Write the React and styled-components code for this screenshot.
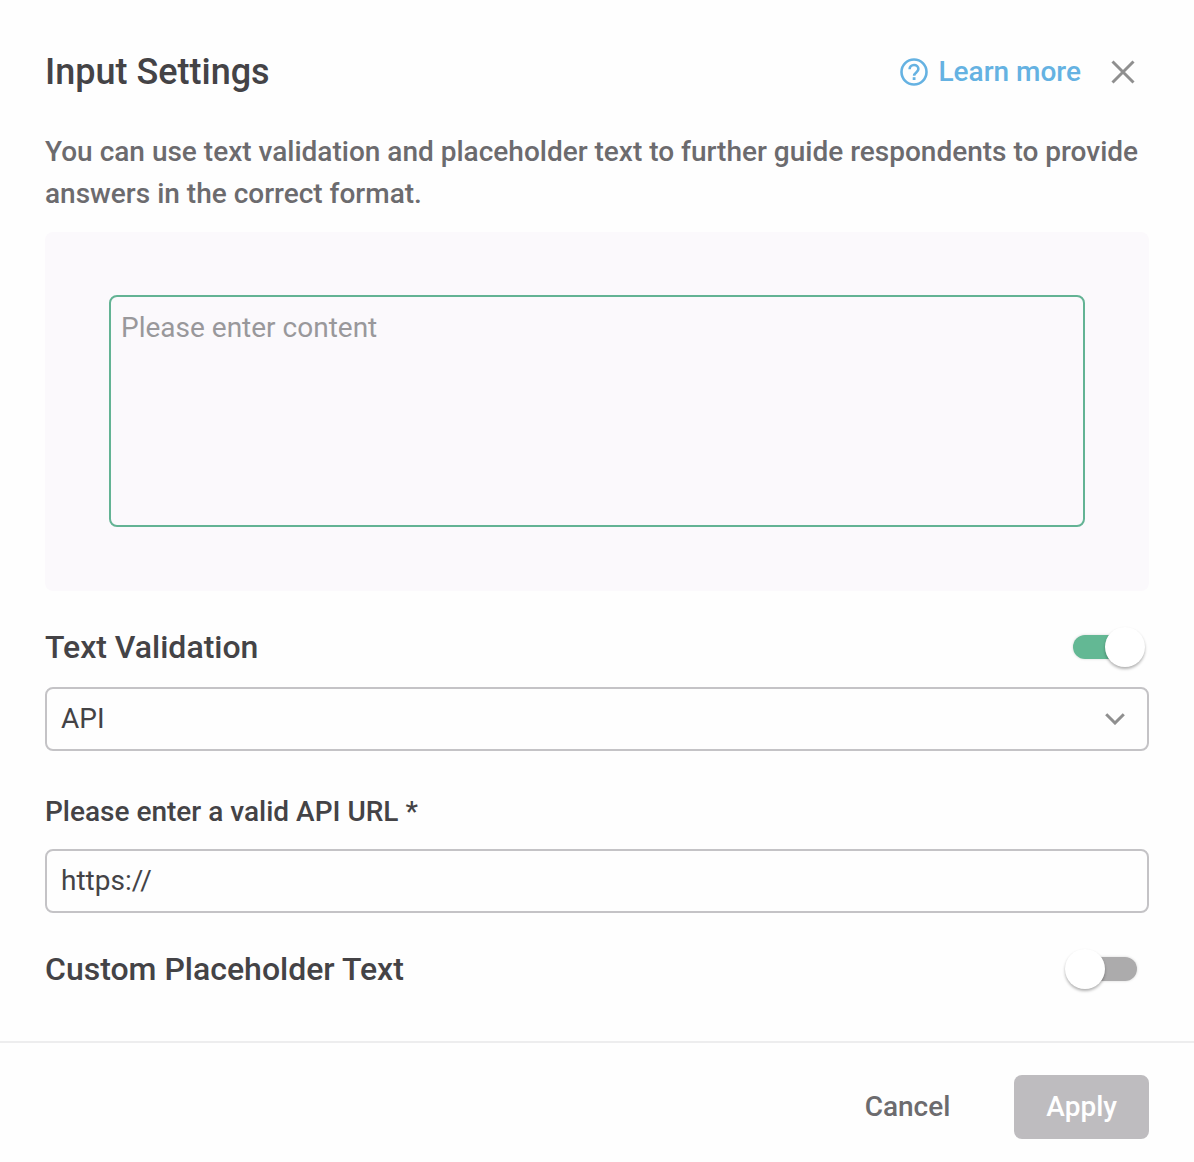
import React, { useState } from 'react';
import styled, { createGlobalStyle } from 'styled-components';

const GlobalStyle = createGlobalStyle`
  * {
    box-sizing: border-box;
  }

  body {
    margin: 0;
    background: #fefefe;
    color: #444346;
    font-family: Roboto, "Liberation Sans", sans-serif;
    font-size: 28px;
  }

  button, input, select, textarea {
    font: inherit;
    color: inherit;
  }
`;

const Dialog = styled.form`
  display: flex;
  flex-direction: column;
`;

const Body = styled.main`
  display: flex;
  flex-direction: column;
  padding: 48px 45px 52px;
`;

const Header = styled.header`
  display: flex;
  align-items: center;
  height: 48px;
`;

const Title = styled.h1`
  flex: 1;
  margin: 0;
  font-size: 36px;
  font-weight: 500;
`;

const LearnMore = styled.a`
  display: flex;
  align-items: center;
  gap: 10px;
  line-height: 32px;
  color: #65b2e2;
  font-weight: 500;
  text-decoration: none;
`;

const IconButton = styled.button`
  display: flex;
  margin-left: 29px;
  margin-right: 13px;
  padding: 0;
  border: none;
  background: none;
  color: #8f8f8f;
  cursor: pointer;
`;

const Description = styled.p`
  margin: 35px 0 17px;
  line-height: 42px;
  font-weight: 500;
  color: #6c6b6e;
`;

const Preview = styled.section`
  display: flex;
  padding: 63px 64px 64px;
  background: #fbf9fc;
  border-radius: 8px;
`;

const PreviewText = styled.textarea`
  flex: 1;
  height: 232px;
  padding: 10px;
  line-height: 42px;
  border: 2px solid #63b394;
  border-radius: 8px;
  background: transparent;
  outline: none;
  resize: none;

  &::placeholder {
    color: #99989b;
    opacity: 1;
  }
`;

const SettingRow = styled.div`
  display: flex;
  align-items: center;
  justify-content: space-between;
  height: 40px;
  margin-top: 36px;
`;

const SettingLabel = styled.label`
  font-size: 32px;
  font-weight: 500;
`;

const Switch = styled.input`
  appearance: none;
  display: flex;
  align-items: center;
  width: 64px;
  height: 24px;
  margin: 0 12px 0 0;
  border-radius: 12px;
  background: #acabac;
  box-shadow: 0 0 2px 1px rgba(0, 0, 0, 0.08);
  cursor: pointer;

  &::before {
    content: '';
    flex: none;
    width: 40px;
    height: 40px;
    margin-left: -8px;
    border-radius: 50%;
    background: #fff;
    box-shadow: 0 2px 3px rgba(0, 0, 0, 0.3);
  }

  &:checked {
    background: #63b894;
  }

  &:checked::before {
    margin-left: 32px;
  }
`;

const SelectField = styled.div`
  display: grid;
  align-items: center;
  margin-top: 20px;

  > * {
    grid-area: 1 / 1;
  }

  svg {
    justify-self: end;
    margin-right: 24px;
    color: #8f8f8f;
    pointer-events: none;
  }
`;

const Select = styled.select`
  appearance: none;
  width: 100%;
  height: 64px;
  padding: 0 14px 2px;
  border: 2px solid #c4c3c6;
  border-radius: 8px;
  background: transparent;
`;

const FieldLabel = styled.label`
  margin: 40px 0 16px;
  line-height: 42px;
  font-weight: 500;
`;

const TextField = styled.input`
  width: 100%;
  height: 64px;
  padding: 0 14px 2px;
  border: 2px solid #c4c3c6;
  border-radius: 8px;
  background: transparent;
`;

const Footer = styled.footer`
  display: flex;
  justify-content: flex-end;
  gap: 32px;
  padding: 32px 45px 23px;
  border-top: 2px solid #ededee;
`;

const Button = styled.button`
  height: 64px;
  padding: 0 32px 2px;
  border: none;
  border-radius: 8px;
  background: ${(props) => (props.$primary ? '#bebcbf' : 'transparent')};
  color: ${(props) => (props.$primary ? '#fff' : '#6c6b6e')};
  font-weight: 500;
  cursor: pointer;
`;

const HelpIcon = () => (
  <svg width="28" height="28" viewBox="0 0 28 28" fill="none" stroke="currentColor" aria-hidden="true">
    <circle cx="14" cy="14" r="12.5" strokeWidth="2.6" />
    <path d="M9.6 11.3C9.6 8.7 11.5 7 14 7s4.4 1.7 4.4 4.1c0 3.1-4.3 3.5-4.3 6.6" strokeWidth="2.6" />
    <rect x="12.7" y="19.2" width="2.8" height="2.8" fill="currentColor" stroke="none" />
  </svg>
);

const CloseIcon = () => (
  <svg width="26" height="26" viewBox="0 0 26 26" fill="none" stroke="currentColor" strokeWidth="3" aria-hidden="true">
    <path d="M2.5 2.5l21 21M23.5 2.5l-21 21" />
  </svg>
);

const ChevronIcon = () => (
  <svg width="20" height="12" viewBox="0 0 20 12" fill="none" stroke="currentColor" strokeWidth="3" aria-hidden="true">
    <path d="M1.2 1.2L10 10l8.8-8.8" />
  </svg>
);

const App = () => {
  const [validation, setValidation] = useState(true);
  const [customPlaceholder, setCustomPlaceholder] = useState(false);
  const [type, setType] = useState('api');
  const [url, setUrl] = useState('https://');

  return (
    <>
      <GlobalStyle />
      <Dialog onSubmit={(e) => e.preventDefault()}>
        <Body>
          <Header>
            <Title>Input Settings</Title>
            <LearnMore href="#learn-more">
              <HelpIcon />
              Learn more
            </LearnMore>
            <IconButton type="button" aria-label="Close">
              <CloseIcon />
            </IconButton>
          </Header>
          <Description>
            You can use text validation and placeholder text to further guide respondents to provide
            answers in the correct format.
          </Description>
          <Preview>
            <PreviewText aria-label="Preview" placeholder="Please enter content" />
          </Preview>

          <SettingRow>
            <SettingLabel htmlFor="validation">Text Validation</SettingLabel>
            <Switch
              id="validation"
              type="checkbox"
              checked={validation}
              onChange={(e) => setValidation(e.target.checked)}
            />
          </SettingRow>
          <SelectField>
            <Select aria-label="Validation type" value={type} onChange={(e) => setType(e.target.value)}>
              <option value="api">API</option>
            </Select>
            <ChevronIcon />
          </SelectField>

          <FieldLabel htmlFor="url">Please enter a valid API URL *</FieldLabel>
          <TextField id="url" type="text" value={url} onChange={(e) => setUrl(e.target.value)} />

          <SettingRow>
            <SettingLabel htmlFor="placeholder">Custom Placeholder Text</SettingLabel>
            <Switch
              id="placeholder"
              type="checkbox"
              checked={customPlaceholder}
              onChange={(e) => setCustomPlaceholder(e.target.checked)}
            />
          </SettingRow>
        </Body>
        <Footer>
          <Button type="button">Cancel</Button>
          <Button type="submit" $primary>Apply</Button>
        </Footer>
      </Dialog>
    </>
  );
};

export default App;
